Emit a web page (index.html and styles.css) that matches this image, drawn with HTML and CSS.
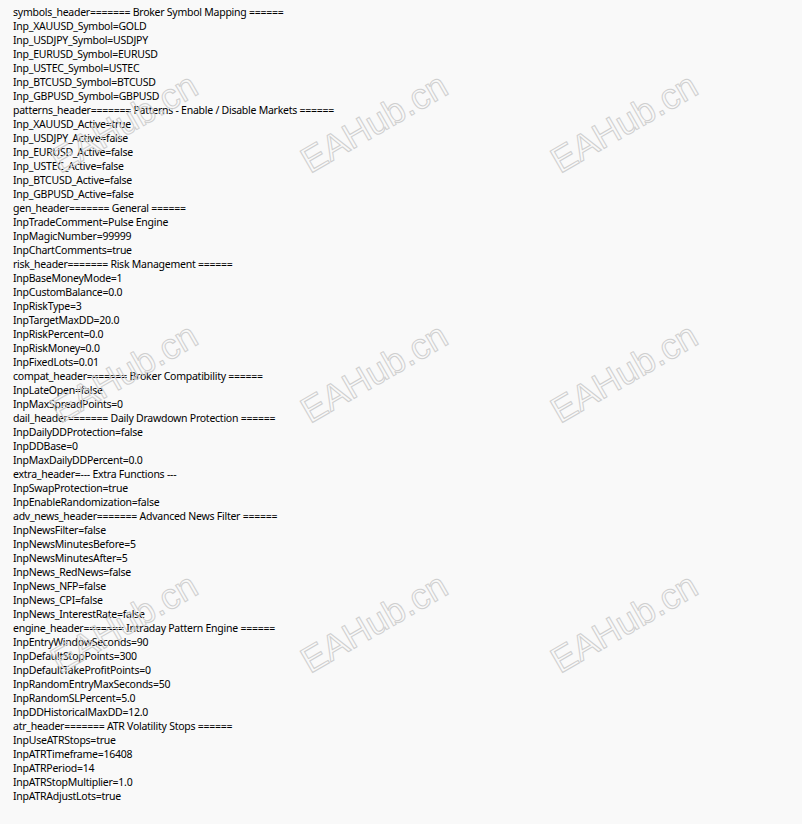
FILE: index.html
```html
<!DOCTYPE html>
<html>
<head>
<meta charset="utf-8">
<link rel="stylesheet" href="styles.css">
</head>
<body>
<div class="page">
  <div class="lines">
    <div class="ln">symbols_header======= Broker Symbol Mapping ======</div>
    <div class="ln">Inp_XAUUSD_Symbol=GOLD</div>
    <div class="ln">Inp_USDJPY_Symbol=USDJPY</div>
    <div class="ln">Inp_EURUSD_Symbol=EURUSD</div>
    <div class="ln">Inp_USTEC_Symbol=USTEC</div>
    <div class="ln">Inp_BTCUSD_Symbol=BTCUSD</div>
    <div class="ln">Inp_GBPUSD_Symbol=GBPUSD</div>
    <div class="ln">patterns_header======= Patterns - Enable / Disable Markets ======</div>
    <div class="ln">Inp_XAUUSD_Active=true</div>
    <div class="ln">Inp_USDJPY_Active=false</div>
    <div class="ln">Inp_EURUSD_Active=false</div>
    <div class="ln">Inp_USTEC_Active=false</div>
    <div class="ln">Inp_BTCUSD_Active=false</div>
    <div class="ln">Inp_GBPUSD_Active=false</div>
    <div class="ln">gen_header======= General ======</div>
    <div class="ln">InpTradeComment=Pulse Engine</div>
    <div class="ln">InpMagicNumber=99999</div>
    <div class="ln">InpChartComments=true</div>
    <div class="ln">risk_header======= Risk Management ======</div>
    <div class="ln">InpBaseMoneyMode=1</div>
    <div class="ln">InpCustomBalance=0.0</div>
    <div class="ln">InpRiskType=3</div>
    <div class="ln">InpTargetMaxDD=20.0</div>
    <div class="ln">InpRiskPercent=0.0</div>
    <div class="ln">InpRiskMoney=0.0</div>
    <div class="ln">InpFixedLots=0.01</div>
    <div class="ln">compat_header======= Broker Compatibility ======</div>
    <div class="ln">InpLateOpen=false</div>
    <div class="ln">InpMaxSpreadPoints=0</div>
    <div class="ln">dail_header======= Daily Drawdown Protection ======</div>
    <div class="ln">InpDailyDDProtection=false</div>
    <div class="ln">InpDDBase=0</div>
    <div class="ln">InpMaxDailyDDPercent=0.0</div>
    <div class="ln">extra_header=--- Extra Functions ---</div>
    <div class="ln">InpSwapProtection=true</div>
    <div class="ln">InpEnableRandomization=false</div>
    <div class="ln">adv_news_header======= Advanced News Filter ======</div>
    <div class="ln">InpNewsFilter=false</div>
    <div class="ln">InpNewsMinutesBefore=5</div>
    <div class="ln">InpNewsMinutesAfter=5</div>
    <div class="ln">InpNews_RedNews=false</div>
    <div class="ln">InpNews_NFP=false</div>
    <div class="ln">InpNews_CPI=false</div>
    <div class="ln">InpNews_InterestRate=false</div>
    <div class="ln">engine_header======= Intraday Pattern Engine ======</div>
    <div class="ln">InpEntryWindowSeconds=90</div>
    <div class="ln">InpDefaultStopPoints=300</div>
    <div class="ln">InpDefaultTakeProfitPoints=0</div>
    <div class="ln">InpRandomEntryMaxSeconds=50</div>
    <div class="ln">InpRandomSLPercent=5.0</div>
    <div class="ln">InpDDHistoricalMaxDD=12.0</div>
    <div class="ln">atr_header======= ATR Volatility Stops ======</div>
    <div class="ln">InpUseATRStops=true</div>
    <div class="ln">InpATRTimeframe=16408</div>
    <div class="ln">InpATRPeriod=14</div>
    <div class="ln">InpATRStopMultiplier=1.0</div>
    <div class="ln">InpATRAdjustLots=true</div>
  </div>
  <svg class="watermark" width="802" height="824" viewBox="0 0 802 824" aria-hidden="true">
    <g class="wm">
      <text transform="translate(60,174) rotate(-30)">EAHub.cn</text>
      <text transform="translate(310,174) rotate(-30)">EAHub.cn</text>
      <text transform="translate(560,174) rotate(-30)">EAHub.cn</text>
      <text transform="translate(60,424) rotate(-30)">EAHub.cn</text>
      <text transform="translate(310,424) rotate(-30)">EAHub.cn</text>
      <text transform="translate(560,424) rotate(-30)">EAHub.cn</text>
      <text transform="translate(60,674) rotate(-30)">EAHub.cn</text>
      <text transform="translate(310,674) rotate(-30)">EAHub.cn</text>
      <text transform="translate(560,674) rotate(-30)">EAHub.cn</text>
    </g>
  </svg>
</div>
</body>
</html>
```

FILE: styles.css
```css
html, body {
  margin: 0;
  padding: 0;
  background: #f9f9f9;
}
.page {
  position: relative;
  width: 802px;
  height: 824px;
  overflow: hidden;
}
.lines {
  padding: 5px 13px 0;
  font-family: "Noto Sans", "DejaVu Sans", sans-serif;
  font-size: 10.5px;
  letter-spacing: -0.25px;
  line-height: 14px;
  color: #000;
}
.ln {
  white-space: pre;
  height: 14px;
}
.watermark {
  position: absolute;
  left: 0;
  top: 0;
  pointer-events: none;
}
.wm text {
  font-family: "Liberation Sans", Arial, sans-serif;
  font-size: 36px;
  fill: none;
  stroke: #cfcfcf;
  stroke-width: 1;
}
```
